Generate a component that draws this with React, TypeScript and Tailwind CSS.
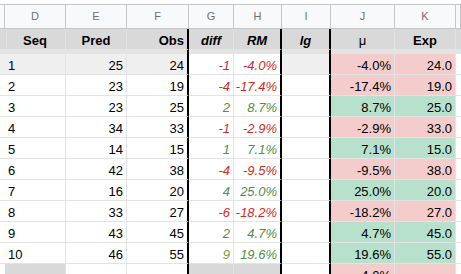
import React from "react";

const grid =
  "grid grid-cols-[5px_61px_61px_62px_45px_48px_49px_64px_61px_5px]";

const cell =
  "flex items-end overflow-hidden whitespace-nowrap border-b border-r border-[#e2e3e3] px-[3px] leading-[16px]";

const RED = "text-[#cc2b2b]";
const GREEN = "text-[#4f8f47]";

type Item = {
  seq: number;
  pred: number;
  obs: number;
  diff: number;
  rm: string;
  exp: string;
};

const rows: Item[] = [
  { seq: 1, pred: 25, obs: 24, diff: -1, rm: "-4.0%", exp: "24.0" },
  { seq: 2, pred: 23, obs: 19, diff: -4, rm: "-17.4%", exp: "19.0" },
  { seq: 3, pred: 23, obs: 25, diff: 2, rm: "8.7%", exp: "25.0" },
  { seq: 4, pred: 34, obs: 33, diff: -1, rm: "-2.9%", exp: "33.0" },
  { seq: 5, pred: 14, obs: 15, diff: 1, rm: "7.1%", exp: "15.0" },
  { seq: 6, pred: 42, obs: 38, diff: -4, rm: "-9.5%", exp: "38.0" },
  { seq: 7, pred: 16, obs: 20, diff: 4, rm: "25.0%", exp: "20.0" },
  { seq: 8, pred: 33, obs: 27, diff: -6, rm: "-18.2%", exp: "27.0" },
  { seq: 9, pred: 43, obs: 45, diff: 2, rm: "4.7%", exp: "45.0" },
  { seq: 10, pred: 46, obs: 55, diff: 9, rm: "19.6%", exp: "55.0" },
];

function Letters() {
  const letters = ["", "D", "E", "F", "G", "H", "I", "J", "K", ""];
  return (
    <div className={`${grid} h-[24px] bg-[#f8f9fa]`}>
      {letters.map((l, i) => (
        <div
          key={i}
          className="flex items-center justify-center overflow-hidden border-b border-r border-[#c4c7c5] text-[11px] text-[#6f6f6f]"
        >
          {l}
        </div>
      ))}
    </div>
  );
}

function Mid({ children }: { children: React.ReactNode }) {
  return <span className="w-full text-center">{children}</span>;
}

function Header() {
  return (
    <div className={`${grid} h-[21px] bg-[#d9d9d9] text-[13px] font-bold`}>
      <div className={cell} />
      <div className={cell}>
        <Mid>Seq</Mid>
      </div>
      <div className={cell}>
        <Mid>Pred</Mid>
      </div>
      <div className={`${cell} justify-end border-r-2 border-r-black`}>Obs</div>
      <div className={`${cell} italic`}>
        <Mid>diff</Mid>
      </div>
      <div className={`${cell} italic border-r-2 border-r-black`}>
        <Mid>RM</Mid>
      </div>
      <div className={`${cell} italic border-r-2 border-r-black`}>
        <Mid>lg</Mid>
      </div>
      <div className={`${cell} font-normal`}>
        <Mid>μ</Mid>
      </div>
      <div className={cell}>
        <Mid>Exp</Mid>
      </div>
      <div className={cell} />
    </div>
  );
}

function FreezeBar() {
  return (
    <div className={`${grid} h-[4px] bg-[#e4e4e4]`}>
      <div />
      <div />
      <div />
      <div className="border-r-2 border-r-black" />
      <div />
      <div className="border-r-2 border-r-black" />
      <div className="border-r-2 border-r-black" />
      <div />
      <div />
      <div />
    </div>
  );
}

function DataRow({ r }: { r: Item }) {
  const first = r.seq === 1;
  const neg = r.diff < 0;
  const tone = neg ? RED : r.diff === 9 ? "text-[#789a3c]" : GREEN;
  const rmTone = neg ? RED : GREEN;
  const fill = neg ? "bg-[#f4cccc]" : "bg-[#b7e1cd]";
  const gray = first ? "bg-[#efefef]" : "bg-white";
  return (
    <div className={`${grid} h-[21px] text-[13px] text-black`}>
      <div className={`${cell} ${gray}`} />
      <div className={`${cell} ${gray}`}>{r.seq}</div>
      <div className={`${cell} ${gray} justify-end`}>{r.pred}</div>
      <div className={`${cell} ${gray} justify-end border-r-2 border-r-black`}>
        {r.obs}
      </div>
      <div className={`${cell} justify-end italic ${tone}`}>{r.diff}</div>
      <div
        className={`${cell} justify-end italic border-r-2 border-r-black ${rmTone}`}
      >
        {r.rm}
      </div>
      <div className={`${cell} ${gray} border-r-2 border-r-black`} />
      <div className={`${cell} ${fill} justify-end`}>{r.rm}</div>
      <div className={`${cell} ${fill} justify-end`}>{r.exp}</div>
      <div className={`${cell} bg-white`} />
    </div>
  );
}

function TailRow() {
  return (
    <div className={`${grid} h-[21px] text-[13px] text-black`}>
      <div className={cell} />
      <div className={`${cell} bg-[#d9d9d9]`} />
      <div className={cell} />
      <div className={`${cell} border-r-2 border-r-black`} />
      <div className={`${cell} bg-[#d9d9d9]`} />
      <div className={`${cell} bg-[#d9d9d9] border-r-2 border-r-black`} />
      <div className={`${cell} border-r-2 border-r-black`} />
      <div className={`${cell} bg-[#f4cccc] justify-end`}>4.0%</div>
      <div className={`${cell} bg-[#f4cccc]`} />
      <div className={cell} />
    </div>
  );
}

export default function App() {
  return (
    <div className="h-[274px] w-[461px] overflow-hidden bg-white font-['Liberation_Sans',Arial,sans-serif]">
      <div className="h-[5px] border-b border-[#c4c7c5] bg-white" />
      <Letters />
      <Header />
      <FreezeBar />
      {rows.map((r) => (
        <DataRow key={r.seq} r={r} />
      ))}
      <TailRow />
    </div>
  );
}
